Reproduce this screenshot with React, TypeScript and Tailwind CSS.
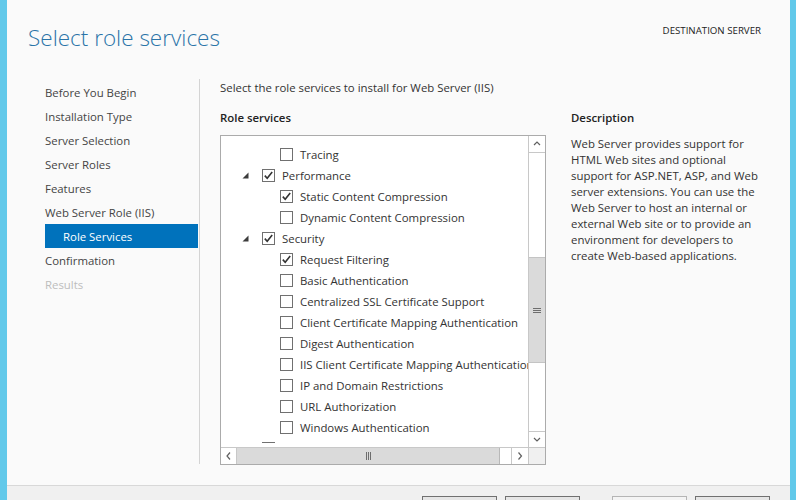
const font = { fontFamily: '"Segoe UI", "Open Sans", "Noto Sans", sans-serif' };

const steps = [
  { label: "Before You Begin" },
  { label: "Installation Type" },
  { label: "Server Selection" },
  { label: "Server Roles" },
  { label: "Features" },
  { label: "Web Server Role (IIS)" },
  { label: "Role Services", active: true },
  { label: "Confirmation" },
  { label: "Results", disabled: true },
];

type Row = { label: string; level: 1 | 2; checked?: boolean; expanded?: boolean };

const rows: Row[] = [
  { label: "Tracing", level: 2 },
  { label: "Performance", level: 1, checked: true, expanded: true },
  { label: "Static Content Compression", level: 2, checked: true },
  { label: "Dynamic Content Compression", level: 2 },
  { label: "Security", level: 1, checked: true, expanded: true },
  { label: "Request Filtering", level: 2, checked: true },
  { label: "Basic Authentication", level: 2 },
  { label: "Centralized SSL Certificate Support", level: 2 },
  { label: "Client Certificate Mapping Authentication", level: 2 },
  { label: "Digest Authentication", level: 2 },
  { label: "IIS Client Certificate Mapping Authentication", level: 2 },
  { label: "IP and Domain Restrictions", level: 2 },
  { label: "URL Authorization", level: 2 },
  { label: "Windows Authentication", level: 2 },
];

const Checkbox = ({ checked }: { checked?: boolean }) => (
  <div className="w-[13px] h-[13px] shrink-0 border border-[#707070] bg-white flex items-center justify-center">
    {checked && (
      <svg width="11" height="11" viewBox="0 0 11 11">
        <path d="M1.8 5.6 L4.2 8.2 L9.2 2" fill="none" stroke="#333" strokeWidth="1.6" />
      </svg>
    )}
  </div>
);

const Chevron = ({ dir }: { dir: "up" | "down" | "left" | "right" }) => {
  const d = {
    up: "M2 6 L5 3 L8 6",
    down: "M2 3 L5 6 L8 3",
    left: "M6 1.5 L3 5 L6 8.5",
    right: "M3.5 1.5 L6.5 5 L3.5 8.5",
  }[dir];
  return (
    <svg width="10" height="10" viewBox="0 0 10 10">
      <path d={d} fill="none" stroke="#606060" strokeWidth="1.2" />
    </svg>
  );
};

const TreeRow = ({ row }: { row: Row }) => {
  if (row.level === 1) {
    return (
      <div className="h-[21px] flex items-center pl-[21px]">
        <svg width="7" height="7" viewBox="0 0 7 7" className="shrink-0">
          <polygon points="6.5,0.5 6.5,6.5 0.5,6.5" fill="#3c3c3c" />
        </svg>
        <div className="w-[13px] shrink-0" />
        <Checkbox checked={row.checked} />
        <span className="ml-[7px]">{row.label}</span>
      </div>
    );
  }
  return (
    <div className="h-[21px] flex items-center pl-[59px]">
      <Checkbox checked={row.checked} />
      <span className="ml-[7px]">{row.label}</span>
    </div>
  );
};

export default function App() {
  return (
    <div
      style={font}
      className="w-[796px] h-[500px] overflow-hidden flex flex-col border-l-[7px] border-r-[6px] border-[#62c9ea] text-[#333] text-[11.4px]"
    >
      <div className="h-[485px] shrink-0 bg-[#fafafa] flex flex-col">
        {/* header */}
        <div className="h-[79px] shrink-0 flex justify-between pl-[21px] pr-[29px]">
          <h1 className="pt-[23px] text-[22.5px] leading-[30px] font-light text-[#2a74a8]">
            Select role services
          </h1>
          <div className="pt-[25px] text-[9.7px] leading-[12px] text-[#222]">DESTINATION SERVER</div>
        </div>

        {/* body */}
        <div className="flex">
          <div className="w-[192px] shrink-0 pl-[38px] pr-[1px] pt-[1px]">
            {steps.map((s) => (
              <div
                key={s.label}
                className={
                  s.active
                    ? "h-[24px] leading-[24px] pt-px pl-[18px] bg-[#0072bc] text-white"
                    : s.disabled
                    ? "h-[24px] leading-[24px] pt-px text-[#bdbdbd]"
                    : "h-[24px] leading-[24px] pt-px text-[#444]"
                }
              >
                {s.label}
              </div>
            ))}
          </div>
          <div className="w-px h-[385px] bg-[#d4d4d4] shrink-0" />

          <div className="pl-[20px]">
            <div className="h-[16px] leading-[16px] pt-px">Select the role services to install for Web Server (IIS)</div>
            <div className="flex mt-[15px]">
              <div>
                <div className="h-[16px] leading-[16px] font-semibold text-[#222]">Role services</div>
                <div className="mt-[9px] w-[326px] h-[330px] border border-[#ababab] bg-white flex flex-col">
                  <div className="flex h-[311px]">
                    <div className="flex-1 overflow-hidden whitespace-nowrap pt-[8px] text-[#333]">
                      {rows.map((r) => (
                        <TreeRow key={r.label} row={r} />
                      ))}
                      <div className="pl-[41px] pt-[4px]">
                        <div className="w-[13px] h-px bg-[#707070]" />
                      </div>
                    </div>
                    {/* vertical scrollbar */}
                    <div className="w-[17px] shrink-0 border-l border-[#c8c8c8] bg-white flex flex-col">
                      <div className="h-[17px] flex items-center justify-center border-b border-[#c8c8c8]">
                        <Chevron dir="up" />
                      </div>
                      <div className="flex-1 flex flex-col pt-[104px]">
                        <div className="h-[106px] bg-[#dadada] border-y border-[#c4c4c4] flex flex-col items-center justify-center gap-[1px]">
                          <div className="w-[8px] h-px bg-[#6d6d6d]" />
                          <div className="w-[8px] h-px bg-[#6d6d6d]" />
                          <div className="w-[8px] h-px bg-[#6d6d6d]" />
                        </div>
                      </div>
                      <div className="h-[16px] flex items-center justify-center border-t border-[#c8c8c8]">
                        <Chevron dir="down" />
                      </div>
                    </div>
                  </div>
                  {/* horizontal scrollbar */}
                  <div className="h-[17px] shrink-0 flex border-t border-[#c8c8c8]">
                    <div className="flex-1 flex bg-white">
                      <div className="w-[16px] flex items-center justify-center border-r border-[#c8c8c8]">
                        <Chevron dir="left" />
                      </div>
                      <div className="w-[263px] bg-[#dadada] border-r border-[#b8b8b8] flex items-center justify-center gap-[1px]">
                        <div className="w-px h-[8px] bg-[#6d6d6d]" />
                        <div className="w-px h-[8px] bg-[#6d6d6d]" />
                        <div className="w-px h-[8px] bg-[#6d6d6d]" />
                      </div>
                      <div className="flex-1" />
                      <div className="w-[17px] flex items-center justify-center border-l border-[#c8c8c8]">
                        <Chevron dir="right" />
                      </div>
                    </div>
                    <div className="w-[17px] shrink-0 bg-[#f0f0f0] border-l border-[#c8c8c8]" />
                  </div>
                </div>
              </div>

              <div className="ml-[25px]">
                <div className="h-[16px] leading-[16px] font-semibold text-[#222]">Description</div>
                <p className="mt-[9px] pt-px leading-[16px] text-[#333]">
                  Web Server provides support for
                  <br />
                  HTML Web sites and optional
                  <br />
                  support for ASP.NET, ASP, and Web
                  <br />
                  server extensions. You can use the
                  <br />
                  Web Server to host an internal or
                  <br />
                  external Web site or to provide an
                  <br />
                  environment for developers to
                  <br />
                  create Web-based applications.
                </p>
              </div>
            </div>
          </div>
        </div>
      </div>

      {/* footer */}
      <div className="flex-1 bg-[#f0f0f0] border-t border-[#d8d8d8] flex justify-end pt-[10px] pr-[20px]">
        <div className="w-[75px] h-[23px] border border-[#707070] bg-[#e5e5e5]" />
        <div className="w-[75px] h-[23px] border border-[#707070] bg-[#e5e5e5] ml-[8px]" />
        <div className="w-[75px] h-[23px] border border-[#b5b5b5] bg-[#f4f4f4] ml-[32px]" />
        <div className="w-[75px] h-[23px] border border-[#707070] bg-[#e5e5e5] ml-[8px]" />
      </div>
    </div>
  );
}
